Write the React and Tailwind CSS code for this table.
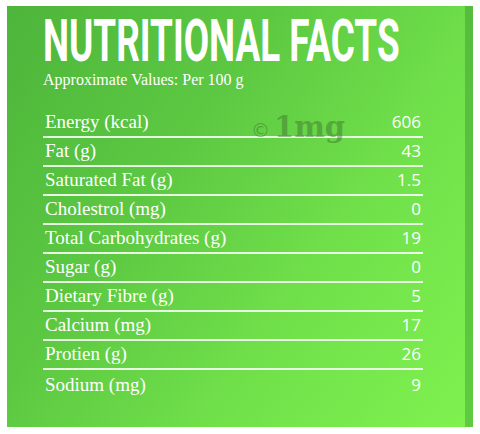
const rows = [
  ["Energy (kcal)", "606"],
  ["Fat (g)", "43"],
  ["Saturated Fat (g)", "1.5"],
  ["Cholestrol (mg)", "0"],
  ["Total Carbohydrates (g)", "19"],
  ["Sugar (g)", "0"],
  ["Dietary Fibre (g)", "5"],
  ["Calcium (mg)", "17"],
  ["Protien (g)", "26"],
  ["Sodium (mg)", "9"],
];

export default function App() {
  return (
    <div className="h-[434px] w-[480px] bg-white pl-[7px] pt-[6px]">
      <div className="relative flex h-[421px] w-[466px] bg-[linear-gradient(125deg,#4db53b_0%,#5cc842_35%,#70e04a_65%,#7ff24f_100%)]">
        <div className="flex w-[458px] flex-col pl-[36px]">
          <h1 className="mt-[11px] h-[50px] origin-left scale-x-[0.625] whitespace-nowrap font-['Roboto',sans-serif] text-[59px] font-bold leading-[48px] text-white">
            NUTRITIONAL FACTS
          </h1>
          <p className="mt-[4px] font-['Liberation_Serif',serif] text-[16px] leading-[18px] text-white">
            Approximate Values: Per 100 g
          </p>
          <div className="relative mt-[20px] w-[380px]">
            <div className="pointer-events-none absolute left-[208px] top-[5px] flex items-baseline font-['DejaVu_Serif',serif] font-bold text-[#3d6e30]/45">
              <span className="mr-[4px] font-['DejaVu_Sans',sans-serif] text-[19px] font-normal">©</span>
              <span className="text-[29px] leading-[27px]">1mg</span>
            </div>
            {rows.map(([label, value], i) => (
              <div
                key={label}
                className={`flex h-[29px] items-end justify-between pb-[4px] pl-[2px] pr-[2px] text-white ${
                  i < rows.length - 1 ? "border-b-2 border-white/85" : ""
                }`}
              >
                <span className="font-['Liberation_Serif',serif] text-[19px] leading-[20px]">{label}</span>
                <span className="font-['Open_Sans',sans-serif] text-[17px] leading-[20px]">{value}</span>
              </div>
            ))}
          </div>
        </div>
        <div className="h-full w-[8px] bg-[linear-gradient(180deg,#56bc3e,#5fca42)]" />
      </div>
    </div>
  );
}
